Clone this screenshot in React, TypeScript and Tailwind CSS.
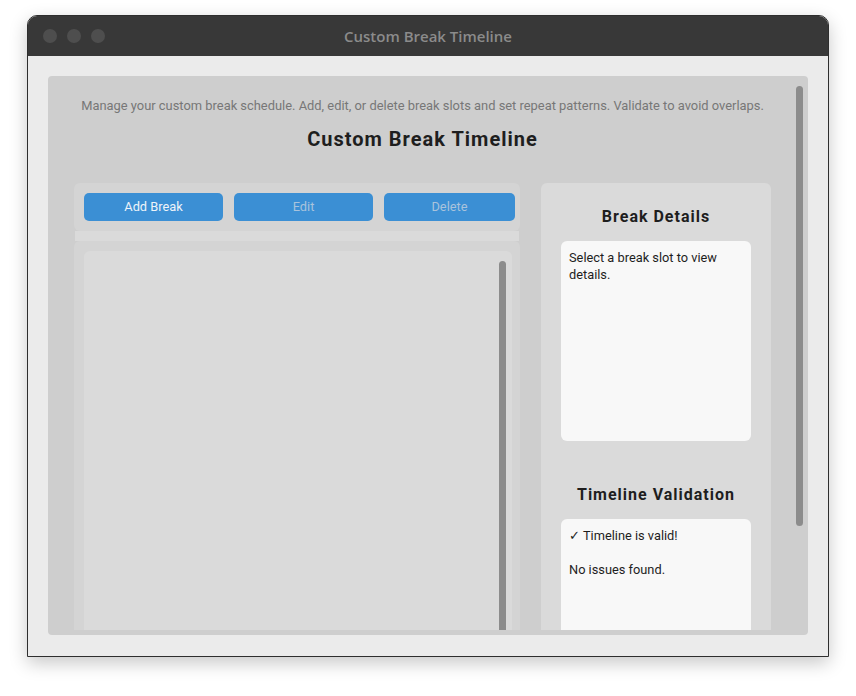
const roboto = { fontFamily: "Roboto, 'Liberation Sans', sans-serif" };

function TrafficLights() {
  return (
    <div className="flex items-center gap-[10px] pl-[15px]">
      <span className="w-[14px] h-[14px] rounded-full bg-[#4e4e4e]" />
      <span className="w-[14px] h-[14px] rounded-full bg-[#4e4e4e]" />
      <span className="w-[14px] h-[14px] rounded-full bg-[#4e4e4e]" />
    </div>
  );
}

function ToolButton({ label, width, enabled }: { label: string; width: string; enabled?: boolean }) {
  return (
    <button
      className={`${width} h-[28px] rounded-[5px] bg-[#3b8fd4] text-[12.8px] ${
        enabled ? "text-[#eef3f9]" : "text-[#a9c3dc]"
      }`}
    >
      {label}
    </button>
  );
}

export default function App() {
  return (
    <div className="min-h-[696px] bg-white pt-[15px] pl-[27px]" style={roboto}>
      <div className="w-[802px] h-[642px] flex flex-col rounded-t-[10px] border border-[#2e2e2e] bg-[#ebebeb] shadow-[0_6px_18px_rgba(0,0,0,0.22)] overflow-hidden">
        {/* title bar */}
        <div className="relative h-[40px] shrink-0 bg-[#383838] flex items-center">
          <TrafficLights />
          <div
            className="absolute inset-0 flex items-center justify-center text-[15px] font-semibold text-[#8b8b8b]"
            style={{ fontFamily: "'Open Sans', 'Noto Sans', sans-serif" }}
          >
            Custom Break Timeline
          </div>
        </div>

        {/* body */}
        <div className="flex-1 pt-[20px] pl-[20px]">
          <div className="relative w-[760px] h-[559px] rounded-[4px] bg-[#cecece] pb-[5px]">
            <div className="h-[554px] overflow-hidden pl-[26px] pr-[37px] pt-[21px]">
              <p className="text-center text-[12.9px] leading-[17px] text-[#777777] whitespace-nowrap">
                Manage your custom break schedule. Add, edit, or delete break slots and set repeat patterns. Validate to avoid overlaps.
              </p>
              <h1 className="mt-[12px] text-center text-[20px] leading-[26px] font-bold tracking-[1px] text-[#1e1e1e]">
                Custom Break Timeline
              </h1>

              <div className="mt-[31px] flex gap-[21px]">
                {/* left column */}
                <div className="w-[446px] flex flex-col">
                  <div className="h-[48px] rounded-[6px] bg-[#d4d4d4] flex items-center gap-[11px] pl-[10px]">
                    <ToolButton label="Add Break" width="w-[139px]" enabled />
                    <ToolButton label="Edit" width="w-[139px]" />
                    <ToolButton label="Delete" width="w-[131px]" />
                  </div>
                  <div className="h-[10px] mx-[1px] bg-[#dadada]" />
                  <div className="h-[420px] rounded-t-[6px] bg-[#d4d4d4] pt-[10px] pl-[10px] pr-[8px]">
                    <div className="relative h-[410px] rounded-[6px] bg-[#dadada]">
                      <div className="absolute left-[415px] top-[10px] w-[7px] h-[400px] rounded-t-full bg-[#8c8c8c]" />
                    </div>
                  </div>
                </div>

                {/* right column */}
                <div className="w-[230px] rounded-[6px] bg-[#dadada] pt-[22px] px-[20px] pb-[40px]">
                  <h2 className="text-center text-[16px] leading-[24px] font-bold tracking-[1px] text-[#1e1e1e]">
                    Break Details
                  </h2>
                  <div className="mt-[12px] h-[200px] rounded-[6px] bg-[#f8f8f8] p-[8px] text-[12.8px] leading-[17px] text-[#1e1e1e]">
                    Select a break slot to view details.
                  </div>
                  <h2 className="mt-[42px] text-center text-[16px] leading-[24px] font-bold tracking-[1px] text-[#1e1e1e]">
                    Timeline Validation
                  </h2>
                  <div className="mt-[12px] h-[200px] rounded-[6px] bg-[#f8f8f8] p-[8px] text-[12.8px] leading-[17px] text-[#1e1e1e]">
                    <div>✓ Timeline is valid!</div>
                    <div>&nbsp;</div>
                    <div>No issues found.</div>
                  </div>
                </div>
              </div>
            </div>

            {/* outer scrollbar */}
            <div className="absolute right-[5px] top-[10px] w-[7px] h-[440px] rounded-full bg-[#8c8c8c]" />
          </div>
        </div>
      </div>
    </div>
  );
}
